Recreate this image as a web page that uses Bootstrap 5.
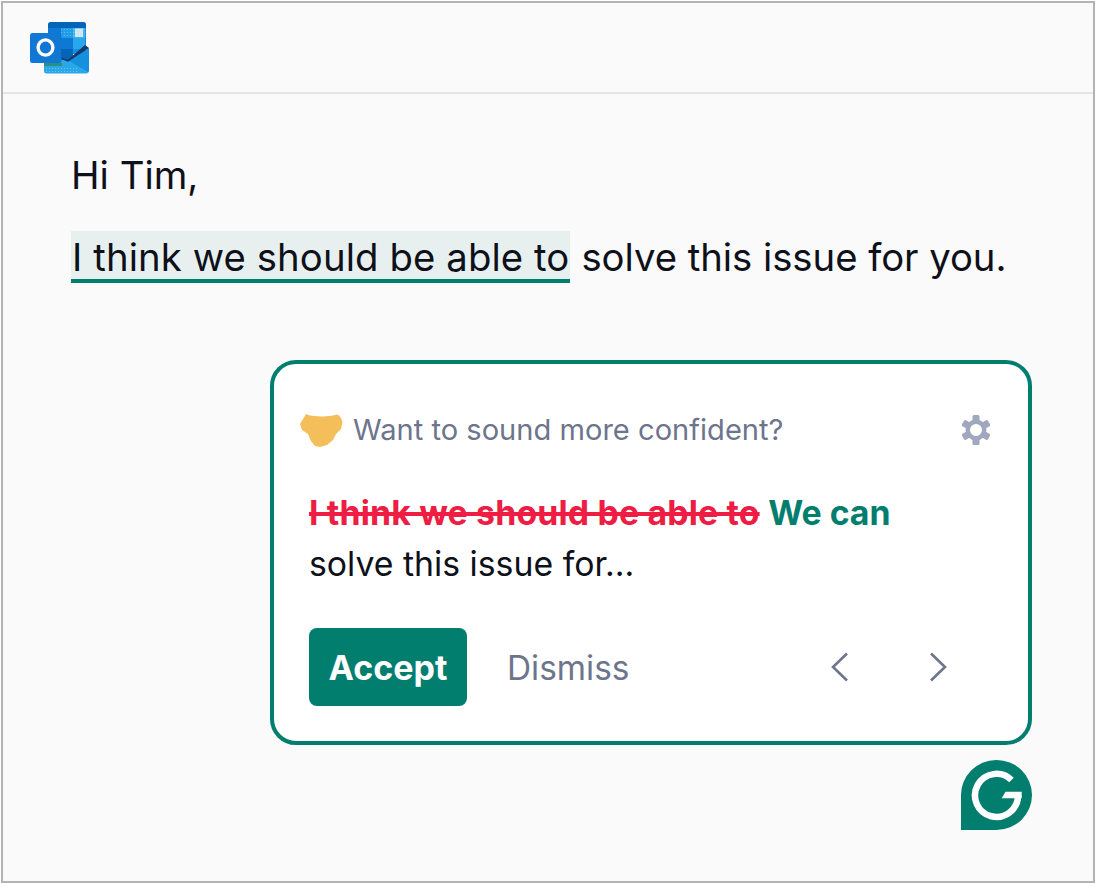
<!doctype html>
<html lang="en"><head><meta charset="utf-8"><title>Grammarly</title>
<link href="https://cdn.jsdelivr.net/npm/bootstrap@5.3.0/dist/css/bootstrap.min.css" rel="stylesheet">
<style>
html,body{margin:0;background:#fff}
body{font-family:Inter,"Liberation Sans",sans-serif;color:#0e101a;height:886px;overflow:hidden}
.frame{width:1094px;height:882px;margin:1px 0 0 1px;border:2px solid #b3b3b3;background:#fafafa}
.mailhead{height:91px;border-bottom:2px solid #e4e4e4;padding:19px 0 0 27px}
.mailbody{padding:57px 60px 0 67px}
.line1{font-size:38.4px;line-height:48px;margin:0 0 32px 1px}
.line2{font-size:38.3px;line-height:48px;margin:0 0 0 1px;white-space:nowrap;letter-spacing:-.04px}
.hl{display:inline-block;background:#e8f0ef;border-bottom:4px solid #027e6f;padding:2px 1px 0 1px;margin-right:11px;line-height:48px;height:52px;letter-spacing:.1px}
.sugg{width:762px;height:385px;margin:77px 0 0 200px;border:4px solid #027e6f;border-radius:26px;background:#fff;padding:48px 37px 0 26px}
.sugtitle{font-size:29.1px;line-height:36px;color:#6d758d}
.blob{margin-right:10px}
.sugtext{font-size:33.8px;line-height:50.5px;margin:40px 0 0 9px}
.del{color:#ee1d43;font-weight:700;letter-spacing:.17px;text-decoration:line-through;text-decoration-thickness:4px}
.add{color:#027e6f;font-weight:700;margin-left:-1px}
.acts{margin:39px 0 0 9px}
.btn.accept{background:#027e6f;border:0;color:#fff;font-size:34px;font-weight:700;width:158px;height:78px;border-radius:8px;padding:0}
.dism{font-size:33.4px;color:#6d758d;margin-left:40px;padding-top:2px}
.navs{gap:80px;margin-right:44px}
.gbadge{margin:15px 0 0 958px;display:block}
</style></head><body>
<div class="frame">
 <div class="mailhead">
  <svg class="d-block" width="60" height="52" viewBox="0 0 60 52">
   <defs><pattern id="dots" width="3" height="3" patternUnits="userSpaceOnUse"><circle cx="1.500" cy="1.500" r=".6" fill="#fff" opacity=".35"/></pattern></defs>
   <rect x="18" y="0" width="38" height="30" rx="2.500" fill="#0364b8"/>
   <rect x="18" y="6" width="13" height="10" fill="#0f78d4"/>
   <rect x="31" y="6" width="12" height="10" fill="#1f9ee8"/>
   <rect x="43" y="6" width="12.500" height="10" fill="#40b4ee"/>
   <rect x="45" y="6.500" width="8" height="8.500" fill="#cfe6f2"/>
   <rect x="31" y="6" width="24.500" height="10" fill="url(#dots)"/>
   <rect x="31" y="16" width="12" height="11" fill="#0f78d4"/>
   <rect x="43" y="16" width="12.500" height="11" fill="#28a8ea"/>
   <rect x="31" y="27" width="12" height="11" fill="#0364b8"/>
   <rect x="43" y="27" width="12.500" height="5" fill="#1490df"/>
   <path d="M14 38 H38 L58 50.800 a2.500 2.500 0 0 1-1.500.7 H16.500 a2.500 2.500 0 0 1-2.500-2.500z" fill="#28a8ea"/>
   <rect x="14" y="44" width="34" height="7" fill="url(#dots)"/>
   <path d="M59 26 V49 a2.500 2.500 0 0 1-1 1.800 L38 38.500z" fill="#1490df"/>
   <path d="M30 27 H31.500 V35.500 L38 37.800 L55 23 L59 26 L38 39.800 L30 36.500z" fill="#17386b"/>
   <rect x="14" y="41" width="18" height="3" fill="#2a9080"/>
   <rect x="0" y="11" width="31.500" height="30" rx="2.500" fill="#0f78d4"/>
   <ellipse cx="15.500" cy="25.500" rx="7.400" ry="7.600" fill="none" stroke="#fff" stroke-width="3.400"/>
  </svg>
 </div>
 <div class="mailbody">
  <p class="line1">Hi Tim,</p>
  <p class="line2"><span class="hl">I think we should be able to</span>solve this issue for you.</p>
  <div class="sugg">
   <div class="d-flex align-items-center justify-content-between">
    <div class="d-flex align-items-center sugtitle">
     <svg class="blob" width="43" height="33" viewBox="0 0 43 33"><path d="M6 0 L10 1.500 L14 2 L22 2.500 L30 2 L38 .5 L41 4 L42.500 8 L41 15 L36 20 L33 26 L27 31 L20 33 L15 32 L11 27 L8 20 L2 16 L0 10 L3 5z" fill="#f4bf5b"/></svg>
     <span>Want to sound more confident?</span>
    </div>
    <svg width="30" height="30" viewBox="0 0 30 30"><g fill="#a2a7c0"><rect x="11.500" y="0" width="7" height="7" rx="1.500"/><rect x="11.500" y="23" width="7" height="7" rx="1.500"/><rect x="11.500" y="0" width="7" height="7" rx="1.500" transform="rotate(60 15 15)"/><rect x="11.500" y="23" width="7" height="7" rx="1.500" transform="rotate(60 15 15)"/><rect x="11.500" y="0" width="7" height="7" rx="1.500" transform="rotate(120 15 15)"/><rect x="11.500" y="23" width="7" height="7" rx="1.500" transform="rotate(120 15 15)"/><path fill-rule="evenodd" d="M15 4.500a10.500 10.500 0 1 1 0 21a10.500 10.500 0 1 1 0-21zM15 9a6 6 0 1 0 0 12a6 6 0 1 0 0-12z"/></g></svg>
   </div>
   <p class="sugtext"><span class="del">I think we should be able to</span> <span class="add">We can</span><br>solve this issue for...</p>
   <div class="acts d-flex align-items-center">
    <button class="btn accept" type="button">Accept</button>
    <span class="dism">Dismiss</span>
    <div class="navs d-flex ms-auto">
     <svg width="18" height="30" viewBox="0 0 18 30"><path d="M16 1.500 L2 15 L16 28.500" fill="none" stroke="#6d758d" stroke-width="2.600"/></svg>
     <svg width="18" height="30" viewBox="0 0 18 30"><path d="M2 1.500 L16 15 L2 28.500" fill="none" stroke="#6d758d" stroke-width="2.600"/></svg>
    </div>
   </div>
  </div>
 </div>
 <svg class="gbadge" width="71" height="70" viewBox="0 0 71 70">
  <path d="M0 70 V35.500 a35.500 35 0 1 1 35.500 34.500z" fill="#027e6f"/>
  <path d="M50.500 20 A21.500 21.500 0 1 0 57 35" fill="none" stroke="#fff" stroke-width="6.500"/>
  <path d="M40.700 38.300 L44.500 31.700 H60.700 V38.300z" fill="#fff"/>
 </svg>
</div>
</body></html>
